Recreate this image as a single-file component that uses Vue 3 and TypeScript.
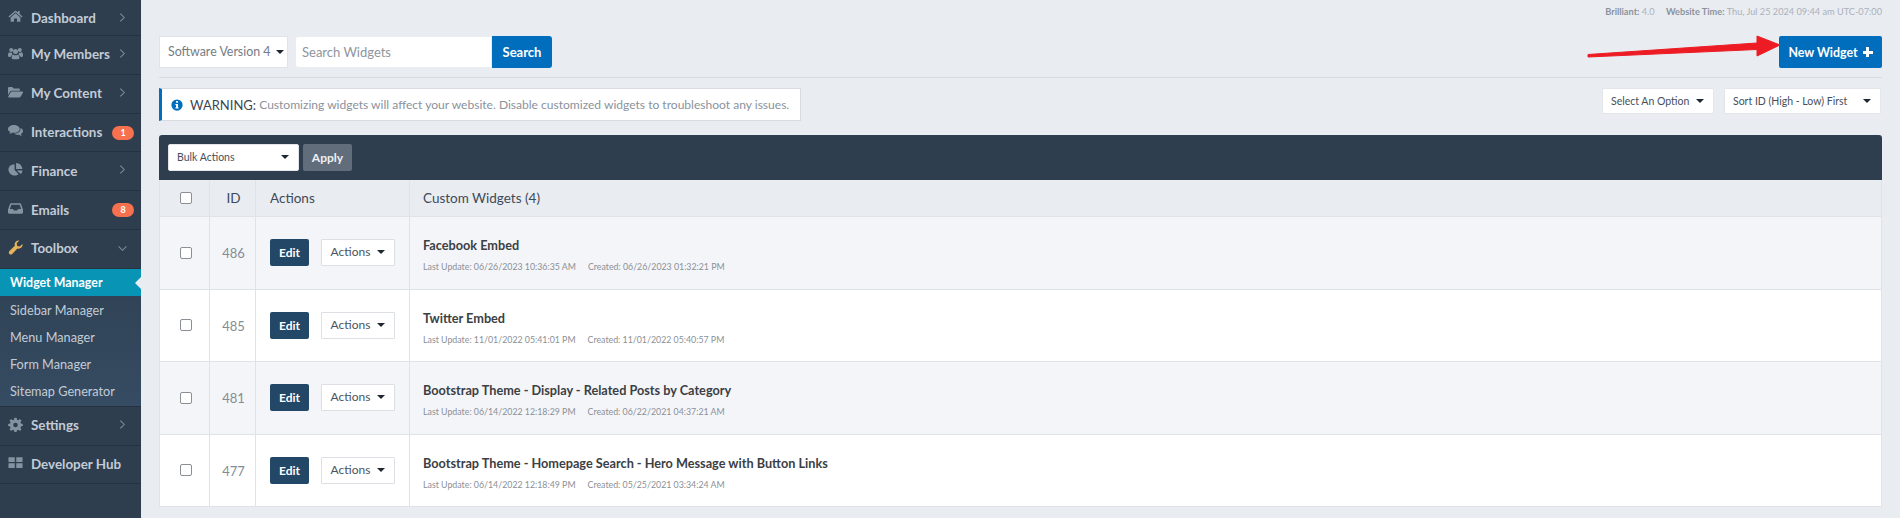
<script setup lang="ts">
interface NavItem { label: string; icon: string; badge?: string; open?: boolean; chevron?: boolean }
interface Row { id: number; title: string; updated: string; created: string }

const icons: Record<string, string> = {
  home: 'M8 1.500 L10.600 3.700 V2.200 H12.400 V5.200 L15.500 8 L14.600 9 L8 3.400 L1.400 9 L.5 8 Z M8 4.600 L13.200 9 V13.500 H9.600 V10 H6.400 V13.500 H2.800 V9 Z',
  users: 'M3.400 2.200a2.100 2.100 0 1 1 0 4.200a2.100 2.100 0 0 1 0-4.200Z M12.600 2.200a2.100 2.100 0 1 1 0 4.200a2.100 2.100 0 0 1 0-4.200Z M8 3.200a2.700 2.700 0 1 1 0 5.400a2.700 2.700 0 0 1 0-5.400Z M0 10.200C0 8 .6 6.800 1.600 6.600c.8.6 1.900.8 2.800.5-.3 1-.1 1.800.5 2.600-1.200.3-2 1-2.400 2H1.200C.4 11.700 0 11.100 0 10.200Z M16 10.200C16 8 15.400 6.800 14.400 6.600c-.8.6-1.900.8-2.800.5.3 1 .1 1.800-.5 2.600 1.200.3 2 1 2.400 2h1.300C15.600 11.700 16 11.100 16 10.200Z M3.800 12.600c0-2 .8-3.300 1.900-3.400 1.400 1 3.200 1 4.600 0 1.100.1 1.900 1.400 1.900 3.400 0 1-.7 1.400-1.500 1.400H5.300c-.8 0-1.500-.4-1.500-1.400Z',
  folder: 'M0 3.600C0 2.700.6 2.200 1.400 2.200H4.600L6 3.600H11.400C12.200 3.600 12.700 4.100 12.700 5V6H4C3.200 6 2.500 6.400 2.100 7.100L0 10.600Z M4 7H15.200C15.900 7 16.200 7.600 15.900 8.200L13.600 12.300C13.300 12.800 12.800 13.200 12.200 13.200H1C.4 13.200.1 12.600.4 12L2.900 7.700C3.200 7.200 3.500 7 4 7Z',
  comments: 'M6.300 2C9.700 2 12.500 3.900 12.500 6.300S9.700 10.500 6.300 10.500C5.700 10.500 5.100 10.400 4.500 10.300C3.500 11.100 2.400 11.500 1.300 11.700C1.900 11 2.300 10.300 2.400 9.500C1 8.700 0 7.600 0 6.300C0 3.900 2.800 2 6.300 2Z M13.400 5.300C15 6 16 7.200 16 8.600C16 9.900 15.100 11 13.800 11.700C13.900 12.500 14.300 13.200 14.900 13.800C13.800 13.700 12.700 13.300 11.700 12.500C9.800 12.800 7.900 12.300 6.700 11.400C10.500 11.400 13.600 9.100 13.400 5.300Z',
  pie: 'M7 2.400V8.600L11.300 13C10.100 13.900 8.700 14.500 7 14.500C3.400 14.500 .5 11.600 .5 8.100C.5 5 3.100 2.500 7 2.400Z M8.600 1C12.300 1.100 15.200 4 15.300 7.500H8.600Z M9.200 9H15.400C15.300 10.500 14.700 11.700 13.700 12.800L9.200 9Z',
  inbox: 'M3.200 2.500H12.800C13.300 2.500 13.700 2.800 13.900 3.200L15.700 8.200C15.900 8.600 16 9 16 9.400V12.200C16 12.900 15.400 13.500 14.700 13.500H1.300C.6 13.500 0 12.900 0 12.200V9.400C0 9 .1 8.600.3 8.200L2.100 3.200C2.300 2.800 2.700 2.500 3.200 2.500Z M3.600 4L2 8.500H5.300L6.200 10H9.800L10.700 8.500H14L12.400 4Z',
  wrench: 'M15.500 4.200C15.700 5.700 15.300 7 14.300 8C13.200 9.100 11.500 9.500 10 9L4.500 14.800C3.700 15.600 2.400 15.600 1.500 14.800C.7 14 .7 12.600 1.500 11.800L7.300 6C6.800 4.500 7.200 2.900 8.300 1.800C9.300 .8 10.700 .3 12.100 .6L9.300 3.500L9.800 6.300L12.500 6.800Z',
  cog: 'M6.800 .8H9.200L9.600 2.800L11 3.400L12.700 2.200L14.400 3.900L13.200 5.600L13.800 7L15.800 7.400V9.600L13.800 10L13.200 11.400L14.400 13.100L12.700 14.800L11 13.600L9.600 14.200L9.200 16H6.800L6.400 14.200L5 13.600L3.300 14.800L1.600 13.100L2.800 11.400L2.200 10L.2 9.600V7.400L2.200 7L2.800 5.600L1.600 3.900L3.300 2.200L5 3.400L6.400 2.800Z M8 6A2.400 2.400 0 1 0 8 10.900A2.400 2.400 0 1 0 8 6Z',
  grid: 'M.5 2.500H7.200V7.500H.5Z M8.800 2.500H15.500V7.500H8.800Z M.5 8.800H7.200V13.800H.5Z M8.800 8.800H15.500V13.800H8.800Z',
}

const topNav: NavItem[] = [
  { label: 'Dashboard', icon: 'home', chevron: true },
  { label: 'My Members', icon: 'users', chevron: true },
  { label: 'My Content', icon: 'folder', chevron: true },
  { label: 'Interactions', icon: 'comments', badge: '1' },
  { label: 'Finance', icon: 'pie', chevron: true },
  { label: 'Emails', icon: 'inbox', badge: '8' },
  { label: 'Toolbox', icon: 'wrench', open: true },
]
const subNav = ['Widget Manager', 'Sidebar Manager', 'Menu Manager', 'Form Manager', 'Sitemap Generator']
const bottomNav: NavItem[] = [
  { label: 'Settings', icon: 'cog', chevron: true },
  { label: 'Developer Hub', icon: 'grid' },
]
const rows: Row[] = [
  { id: 486, title: 'Facebook Embed', updated: '06/26/2023 10:36:35 AM', created: '06/26/2023 01:32:21 PM' },
  { id: 485, title: 'Twitter Embed', updated: '11/01/2022 05:41:01 PM', created: '11/01/2022 05:40:57 PM' },
  { id: 481, title: 'Bootstrap Theme - Display - Related Posts by Category', updated: '06/14/2022 12:18:29 PM', created: '06/22/2021 04:37:21 AM' },
  { id: 477, title: 'Bootstrap Theme - Homepage Search - Hero Message with Button Links', updated: '06/14/2022 12:18:49 PM', created: '05/25/2021 03:34:24 AM' },
]
</script>

<template>
  <div class="page">
    <aside class="sidebar">
      <a v-for="item in topNav" :key="item.label" class="nav-item">
        <svg class="nav-icon" :class="{ gold: item.icon === 'wrench' }" viewBox="0 0 16 16"><path :d="icons[item.icon]" fill-rule="evenodd" /></svg>
        <span class="nav-label">{{ item.label }}</span>
        <span v-if="item.badge" class="badge">{{ item.badge }}</span>
        <svg v-else-if="item.chevron" class="chev" viewBox="0 0 8 12"><path d="M1.500 1.500 6 6 1.500 10.500" /></svg>
        <svg v-else-if="item.open" class="chev down" viewBox="0 0 12 8"><path d="M1.500 1.500 6 6 10.500 1.500" /></svg>
      </a>
      <div class="subnav">
        <a v-for="(s, i) in subNav" :key="s" class="sub-item" :class="{ current: i === 0 }">{{ s }}</a>
      </div>
      <a v-for="item in bottomNav" :key="item.label" class="nav-item">
        <svg class="nav-icon" viewBox="0 0 16 16"><path :d="icons[item.icon]" fill-rule="evenodd" /></svg>
        <span class="nav-label">{{ item.label }}</span>
        <svg v-if="item.chevron" class="chev" viewBox="0 0 8 12"><path d="M1.500 1.500 6 6 1.500 10.500" /></svg>
      </a>
    </aside>

    <main class="main">
      <div class="status">
        <b>Brilliant:</b> 4.0 <b class="time-label">Website Time:</b> <span class="time">Thu, Jul 25 2024 09:44 am UTC-07:00</span>
      </div>

      <div class="head-row">
        <div class="version">Software Version 4 <i class="caret small"></i></div>
        <div class="search">
          <span class="search-input">Search Widgets</span>
          <button class="search-btn">Search</button>
        </div>
        <button class="new-btn">New Widget <span class="plus"></span></button>
      </div>

      <div class="filter-row">
        <div class="alert">
          <svg class="info" viewBox="0 0 16 16"><path fill-rule="evenodd" d="M8 .5a7.500 7.500 0 1 1 0 15a7.500 7.500 0 0 1 0-15Z M6.800 2.700V5H9.300V2.700Z M5.800 6.500V8H6.800V11.300H5.800V12.800H10.200V11.300H9.300V6.500Z" /></svg>
          <span class="warn">WARNING:</span>&nbsp;<span>Customizing widgets will affect your website. Disable customized widgets to troubleshoot any issues.</span>
        </div>
        <div class="filters">
          <div class="select opt">Select An Option <i class="caret"></i></div>
          <div class="select sort">Sort ID (High - Low) First <i class="caret"></i></div>
        </div>
      </div>

      <section class="panel">
        <div class="toolbar">
          <div class="select bulk">Bulk Actions <i class="caret"></i></div>
          <button class="apply">Apply</button>
        </div>
        <div class="tr thead">
          <div class="td center nudge"><span class="check"></span></div>
          <div class="td center nudge">ID</div>
          <div class="td pad">Actions</div>
          <div class="td pad last">Custom Widgets (4)</div>
        </div>
        <div v-for="(r, i) in rows" :key="r.id" class="tr row" :class="{ odd: i % 2 === 0 }">
          <div class="td center nudge"><span class="check"></span></div>
          <div class="td center nudge id">{{ r.id }}</div>
          <div class="td pad actions">
            <button class="edit">Edit</button>
            <div class="act">Actions <i class="caret small"></i></div>
          </div>
          <div class="td pad last info-cell">
            <div class="title">{{ r.title }}</div>
            <div class="meta"><span>Last Update: {{ r.updated }}</span><span>Created: {{ r.created }}</span></div>
          </div>
        </div>
      </section>

      <svg class="arrow" viewBox="0 0 200 24" width="200" height="24">
        <path d="M1 20.500 L170 9 L170 2 L193 11 L170 22 L170 15.500 L1 23 Z" fill="#ed1c24" stroke="#ed1c24" stroke-width="1" stroke-linejoin="round" />
      </svg>
    </main>
  </div>
</template>

<style>
html, body { margin: 0; background: #e9ecf1; }
</style>

<style scoped>
* { box-sizing: border-box; }
.page {
  display: flex;
  width: 1900px;
  height: 518px;
  overflow: hidden;
  font-family: "Lato", "Open Sans", sans-serif;
  color: #3c4857;
  background: #e9ecf1;
}
.sidebar {
  width: 141px;
  flex: none;
  background: #2e3e4f;
  color: #c3ccd6;
  display: flex;
  flex-direction: column;
}
.nav-item {
  height: 38.800px;
  flex: none;
  display: flex;
  align-items: center;
  padding: 0 0 1px 8px;
  border-bottom: 1px solid #25323f;
  font-size: 13.400px;
  font-weight: 700;
  position: relative;
}
.nav-item:first-child { height: 36px; padding-bottom: 0; }
.nav-icon { width: 15px; height: 15px; fill: #8593a1; flex: none; margin: -2px 8px 0 0; }
.nav-icon.gold { fill: #e5b45a; }
.nav-label { white-space: nowrap; }
.chev { width: 7px; height: 11px; position: absolute; left: 119px; top: 12px; fill: none; stroke: #7e8c9a; stroke-width: 1.200; }
.chev.down { width: 11px; height: 7px; left: 117px; top: 15px; }
.badge {
  position: absolute;
  left: 112px;
  top: 12px;
  width: 22px;
  height: 14px;
  border-radius: 7px;
  background: #f8714e;
  color: #fff;
  font-size: 9px;
  line-height: 14px;
  text-align: center;
}
.subnav {
  height: 138px;
  flex: none;
  background: linear-gradient(#2f4154, #364c62);
  border-bottom: 1px solid #25323f;
}
.sub-item {
  display: block;
  height: 27px;
  line-height: 28px;
  padding-left: 10px;
  font-size: 12.700px;
  color: #c3ccd6;
  position: relative;
}
.sub-item.current { background: #0895b5; color: #fff; font-weight: 700; font-size: 12.400px; }
.sub-item.current::after {
  content: "";
  position: absolute;
  right: 0;
  top: 8px;
  border: 6px solid transparent;
  border-left-width: 0;
  border-right-color: #e9ecf1;
}
.main {
  flex: 1;
  padding: 0 18px 0 18px;
  position: relative;
}
.status {
  height: 36px;
  padding-top: 6px;
  text-align: right;
  font-size: 9.200px;
  color: #a9b1bb;
  white-space: pre-wrap;
}
.status b { color: #8b929c; font-weight: 700; }
.time-label { margin-left: 9px; }
.head-row {
  display: flex;
  height: 42px;
  padding-bottom: 9px;
  border-bottom: 1px solid #d8dce1;
  gap: 7px;
}
.version {
  width: 129px;
  height: 32px;
  background: #fff;
  border: 1px solid #e0e3e7;
  font-size: 12.400px;
  color: #757c85;
  line-height: 30px;
  padding-left: 8px;
  white-space: nowrap;
}
.search { display: flex; height: 32px; }
.search-input {
  width: 197px;
  background: #fff;
  border: 1px solid #e9ecf1;
  border-radius: 3px 0 0 3px;
  font-size: 13px;
  line-height: 30px;
  padding-left: 6px;
  color: #8f959d;
}
.search-btn {
  width: 60px;
  border: 0;
  background: #006ebc;
  border-radius: 0 3px 3px 0;
  color: #fff;
  font: 700 13px "Lato", sans-serif;
}
.new-btn {
  margin-left: auto;
  width: 103px;
  height: 32px;
  border: 0;
  border-radius: 2px;
  background: #006ebc;
  color: #fff;
  font: 700 12.400px "Lato", sans-serif;
  display: flex;
  align-items: center;
  justify-content: center;
  gap: 5px;
}
.plus {
  width: 10px;
  height: 10px;
  background:
    linear-gradient(#fff, #fff) center / 100% 3px no-repeat,
    linear-gradient(#fff, #fff) center / 3px 100% no-repeat;
}
.filter-row {
  display: flex;
  justify-content: space-between;
  align-items: flex-start;
  margin-top: 10px;
  height: 47px;
}
.alert {
  width: 642px;
  height: 33px;
  background: #fff;
  border: 1px solid #d8dce1;
  border-left: 3px solid #006ebc;
  display: flex;
  align-items: center;
  padding-left: 9px;
  font-size: 12.050px;
  color: #8a929c;
  white-space: nowrap;
}
.info { width: 12px; height: 12px; fill: #006ebc; margin-right: 7px; flex: none; }
.warn { color: #3d4652; font-size: 13px; }
.filters { display: flex; gap: 10px; padding-right: 1px; }
.select {
  height: 26px;
  background: #fff;
  border: 1px solid #e2e5e9;
  border-radius: 1px;
  font-size: 10.500px;
  color: #46505c;
  display: flex;
  align-items: center;
  padding-left: 8px;
  white-space: nowrap;
  position: relative;
}
.opt { width: 112px; }
.sort { width: 157px; }
.caret {
  position: absolute;
  right: 9px;
  top: 10px;
  border: 4px solid transparent;
  border-top: 4px solid #1e2730;
  border-bottom-width: 0;
}
.caret.small {
  position: static;
  display: inline-block;
  vertical-align: 2px;
  margin-left: 2px;
}
.panel { border-radius: 3px 3px 0 0; overflow: hidden; }
.toolbar {
  height: 45px;
  background: #2e3e4f;
  display: flex;
  align-items: flex-start;
  gap: 4px;
  padding: 9px 0 0 9px;
}
.bulk { width: 131px; height: 27px; border-radius: 2px; padding-bottom: 2px; }
.apply {
  width: 49px;
  height: 27px;
  border: 0;
  border-radius: 2px;
  background: #616d7a;
  color: #eef0f2;
  font: 700 12px "Lato", sans-serif;
}
.tr {
  display: grid;
  grid-template-columns: 50px 46px 154px 1fr;
  border-left: 1px solid #dfe2e6;
  border-right: 1px solid #dfe2e6;
  border-bottom: 1px solid #dfe2e6;
}
.thead { height: 37px; background: #e9ecf1; font-size: 13.500px; color: #3e4a57; }
.row { height: 72.500px; background: #fff; }
.row.odd { background: #f4f5f9; }
.td {
  display: flex;
  align-items: center;
  border-right: 1px solid #dfe2e6;
}
.td:last-child { border-right: 0; }
.center { justify-content: center; }
.nudge { padding-left: 2px; }
.pad { padding-left: 14px; }
.pad.last { padding-left: 13px; }
.id { font-size: 13px; color: #868c94; padding-top: 1px; }
.check {
  width: 12px;
  height: 12px;
  background: #fff;
  border: 1px solid #8a8f95;
  border-radius: 2px;
}
.actions { gap: 12px; }
.edit {
  width: 39px;
  height: 27px;
  border: 0;
  border-radius: 2px;
  background: #234766;
  color: #fff;
  font: 700 12px "Lato", sans-serif;
}
.act {
  width: 74px;
  height: 27px;
  background: #fff;
  border: 1px solid #dcdfe3;
  border-radius: 1px;
  font-size: 12px;
  line-height: 24px;
  text-align: center;
  color: #4a5460;
  white-space: nowrap;
}
.act .caret { margin-left: 4px; }
.info-cell { flex-direction: column; align-items: flex-start; justify-content: center; padding-top: 4px; }
.title { font-size: 12.700px; font-weight: 700; color: #3b4044; }
.meta { font-size: 8.800px; color: #8a9097; margin-top: 8px; display: flex; gap: 12px; }
.arrow { position: absolute; left: 1446px; top: 34px; }
</style>
